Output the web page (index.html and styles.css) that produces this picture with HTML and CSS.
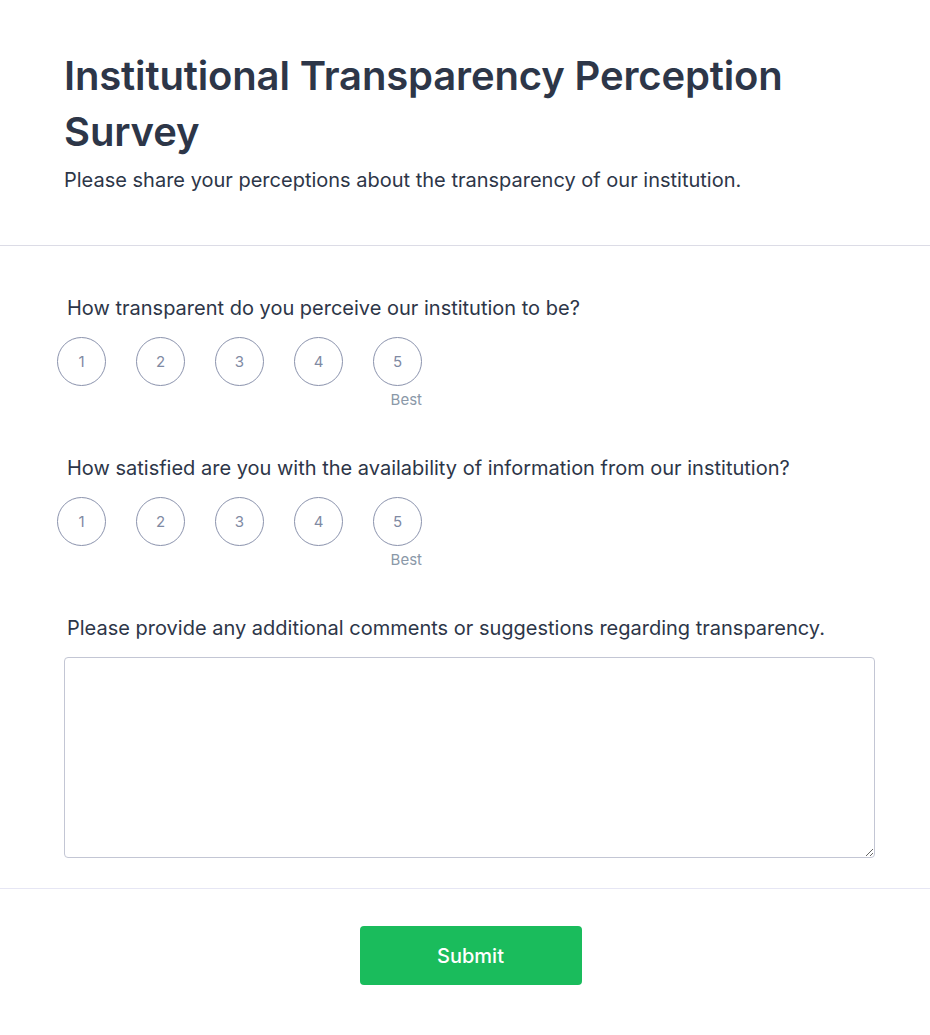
FILE: index.html
```html
<!DOCTYPE html>
<html lang="en">
<head>
<meta charset="utf-8">
<title>Institutional Transparency Perception Survey</title>
<link rel="stylesheet" href="styles.css">
</head>
<body>
<header class="header">
  <h1 class="title">Institutional Transparency Perception Survey</h1>
  <p class="subtitle">Please share your perceptions about the transparency of our institution.</p>
</header>
<main class="questions">
  <section class="question">
    <div class="label">How transparent do you perceive our institution to be?</div>
    <div class="scale">
      <div class="circles">
        <button class="circle" type="button">1</button>
        <button class="circle" type="button">2</button>
        <button class="circle" type="button">3</button>
        <button class="circle" type="button">4</button>
        <button class="circle" type="button">5</button>
      </div>
      <div class="best">Best</div>
    </div>
  </section>
  <section class="question">
    <div class="label">How satisfied are you with the availability of information from our institution?</div>
    <div class="scale">
      <div class="circles">
        <button class="circle" type="button">1</button>
        <button class="circle" type="button">2</button>
        <button class="circle" type="button">3</button>
        <button class="circle" type="button">4</button>
        <button class="circle" type="button">5</button>
      </div>
      <div class="best">Best</div>
    </div>
  </section>
  <section class="question last">
    <div class="label">Please provide any additional comments or suggestions regarding transparency.</div>
    <textarea class="comments"></textarea>
  </section>
</main>
<footer class="footer">
  <button class="submit" type="button">Submit</button>
</footer>
</body>
</html>
```
FILE: styles.css
```css
* { box-sizing: border-box; }
html, body { background: #ffffff; }
body {
  margin: 0;
  font-family: Inter, "Noto Sans", sans-serif;
  color: #2d3648;
}
.header {
  padding: 48px 55px 50px 64px;
  border-bottom: 1px solid #dcdce6;
}
.title {
  margin: 0;
  font-size: 40px;
  line-height: 56px;
  font-weight: 600;
  letter-spacing: -0.14px;
}
.subtitle {
  margin: 5px 0 0;
  font-size: 20px;
  line-height: 30px;
  font-weight: 400;
}
.questions {
  padding: 47px 55px 30px 64px;
  border-bottom: 1px solid #e6e6f4;
}
.question { margin-bottom: 43px; }
.question.last { margin-bottom: 0; }
.label {
  padding-left: 3px;
  font-size: 20px;
  line-height: 30px;
  font-weight: 400;
}
.scale {
  display: inline-flex;
  flex-direction: column;
  align-items: flex-end;
  margin-left: -7px;
  margin-top: 14px;
}
.circles {
  display: flex;
  gap: 30px;
}
.circle {
  width: 49px;
  height: 49px;
  border-radius: 50%;
  border: 1px solid #8b93ad;
  background: #fff;
  color: #7f8aa3;
  font-family: Inter, sans-serif;
  font-size: 15px;
  padding: 0;
  display: flex;
  align-items: center;
  justify-content: center;
}
.best {
  margin-top: 4px;
  font-size: 15px;
  line-height: 20px;
  color: #8a98a8;
}
.comments {
  display: block;
  width: 100%;
  height: 201px;
  margin-top: 14px;
  border: 1px solid #c3c6d4;
  border-radius: 4px;
  font-family: Inter, sans-serif;
  font-size: 16px;
  padding: 10px;
  resize: vertical;
}
.footer {
  display: flex;
  justify-content: center;
  padding: 37px 55px 50px 66px;
}
.submit {
  width: 222px;
  height: 59px;
  border: none;
  border-radius: 4px;
  background: #1abc5c;
  color: #ffffff;
  font-family: Inter, sans-serif;
  font-size: 20px;
  font-weight: 500;
}
```
